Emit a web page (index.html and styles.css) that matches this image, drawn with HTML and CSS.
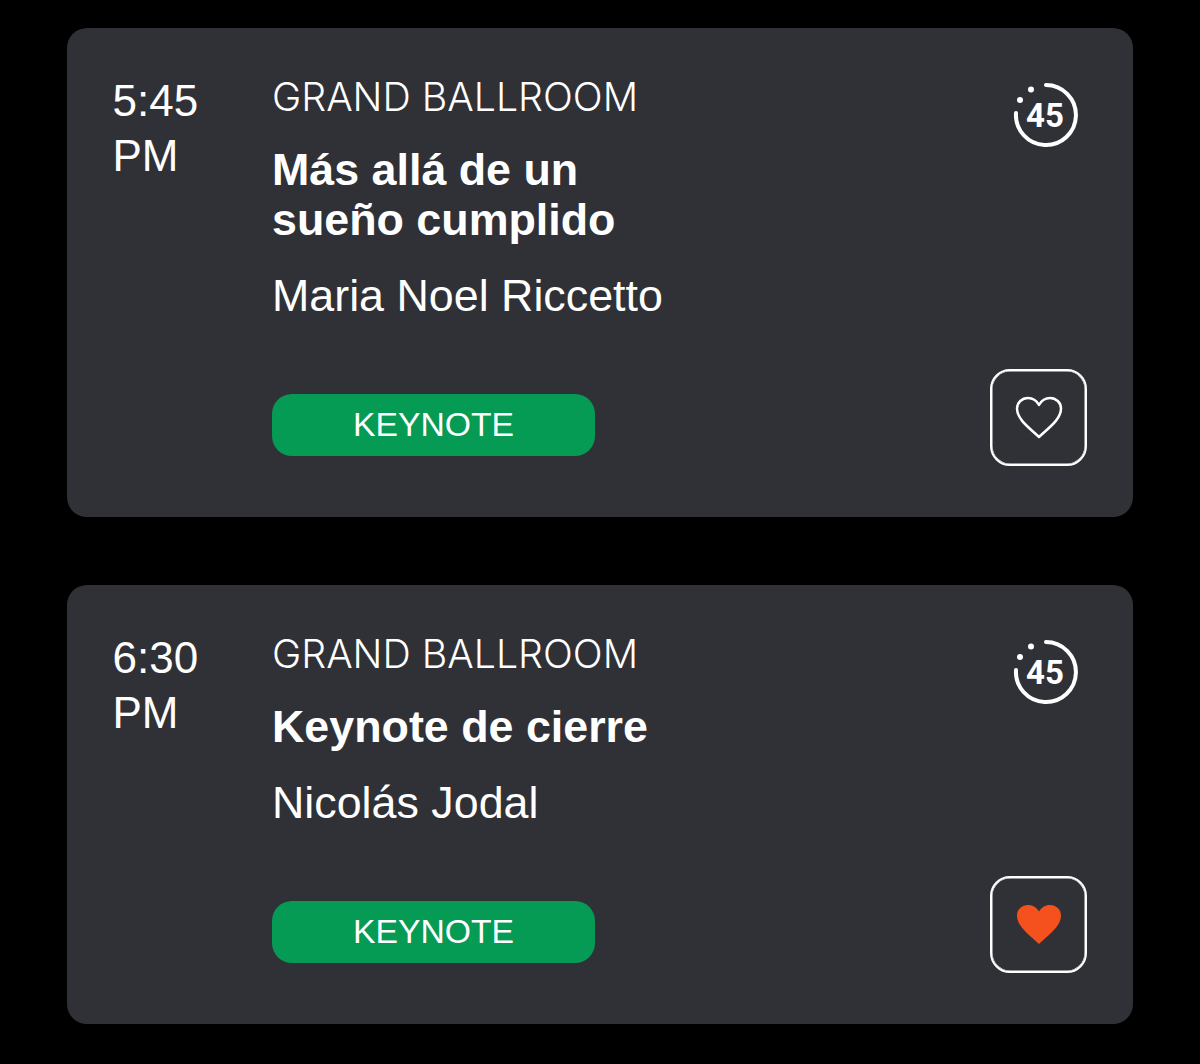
FILE: index.html
```html
<!DOCTYPE html>
<html lang="en">
<head>
    <meta charset="UTF-8">
    <title>Agenda</title>
    <link rel="stylesheet" href="styles.css">
</head>
<body>
    <div id="wrap">
        <div class="card">
            <div class="time">5:45<br>PM</div>
            <div class="info">
                <div class="room">GRAND BALLROOM</div>
                <div class="title">Más allá de un<br>sueño cumplido</div>
                <div class="speaker">Maria Noel Riccetto</div>
                <div class="tag">KEYNOTE</div>
            </div>
            <div class="side">
                <svg class="dur" viewBox="0 0 72 72" width="72" height="72">
                    <path class="ring" d="M36 6a30 30 0 1 1-30 28"/>
                    <circle class="pip" cx="21" cy="10.500" r="3"/>
                    <circle class="pip" cx="10" cy="21" r="3"/>
                    <text class="mins" x="35" y="48">45</text>
                </svg>
                <div class="fav">
                    <svg viewBox="0 0 50 44" width="50" height="44">
                        <path class="heart-line" d="M25 41C17 33 3 24 3 12.500 3 6.500 8 2 14 2c5 0 8.500 2.500 11 7 2.500-4.500 6-7 11-7 6 0 11 4.500 11 10.500C47 24 33 33 25 41z"/>
                    </svg>
                </div>
            </div>
        </div>
        <div class="card">
            <div class="time">6:30<br>PM</div>
            <div class="info">
                <div class="room">GRAND BALLROOM</div>
                <div class="title">Keynote de cierre</div>
                <div class="speaker">Nicolás Jodal</div>
                <div class="tag">KEYNOTE</div>
            </div>
            <div class="side">
                <svg class="dur" viewBox="0 0 72 72" width="72" height="72">
                    <path class="ring" d="M36 6a30 30 0 1 1-30 28"/>
                    <circle class="pip" cx="21" cy="10.500" r="3"/>
                    <circle class="pip" cx="10" cy="21" r="3"/>
                    <text class="mins" x="35" y="48">45</text>
                </svg>
                <div class="fav">
                    <svg viewBox="0 0 50 44" width="50" height="44">
                        <path class="heart-full" d="M25 42C17 34 3 25 3 13.500 3 7.500 8 3 14 3c5 0 8.500 2.500 11 6.500C27.500 5.500 31 3 36 3c6 0 11 4.500 11 10.500C47 25 33 34 25 42z"/>
                    </svg>
                </div>
            </div>
        </div>
    </div>
</body>
</html>
```
FILE: styles.css
```css
html, body {
    margin: 0;
    background: #000;
}
#wrap {
    display: flex;
    flex-direction: column;
    gap: 68px;
    width: 1066px;
    margin: 0 auto;
    padding-top: 28px;
    font-family: "Liberation Sans", Arial, sans-serif;
    color: #fff;
}
.card {
    display: flex;
    padding: 45px 46px 51px 45.500px;
    background: #303136;
    border-radius: 20px;
}
.time {
    width: 159.500px;
    font-size: 44px;
    line-height: 55px;
}
.info {
    flex: 1;
    padding-bottom: 10px;
}
.room {
    font-family: Inter, "Liberation Sans", sans-serif;
    font-weight: 300;
    font-size: 39.300px;
    line-height: 48px;
}
.title {
    margin-top: 22.500px;
    font-size: 44.800px;
    font-weight: bold;
    line-height: 50.500px;
}
.speaker {
    margin-top: 25.500px;
    font-size: 44.800px;
    line-height: 50px;
}
.tag {
    width: 323px;
    height: 62px;
    margin-top: 74px;
    background: #059b55;
    border-radius: 20px;
    font-size: 33.700px;
    line-height: 60px;
    text-align: center;
}
.side {
    display: flex;
    flex-direction: column;
    justify-content: space-between;
    align-items: flex-end;
    width: 97px;
}
.dur {
    margin-top: 6px;
    margin-right: 5px;
}
.ring {
    fill: none;
    stroke: #fff;
    stroke-width: 4;
    stroke-linecap: round;
}
.pip {
    fill: #fff;
}
.mins {
    fill: #fff;
    font-family: Roboto, "Liberation Sans", sans-serif;
    font-size: 33px;
    font-weight: 700;
    text-anchor: middle;
}
.fav {
    display: flex;
    align-items: center;
    justify-content: center;
    box-sizing: border-box;
    width: 97px;
    height: 97px;
    border: 2px solid #fff;
    border-radius: 20px;
    box-shadow: inset 0 0 0 0.500px #fff;
}
.heart-line {
    fill: none;
    stroke: #fff;
    stroke-width: 2.500;
    stroke-linejoin: round;
}
.heart-full {
    fill: #f4511e;
}
```
